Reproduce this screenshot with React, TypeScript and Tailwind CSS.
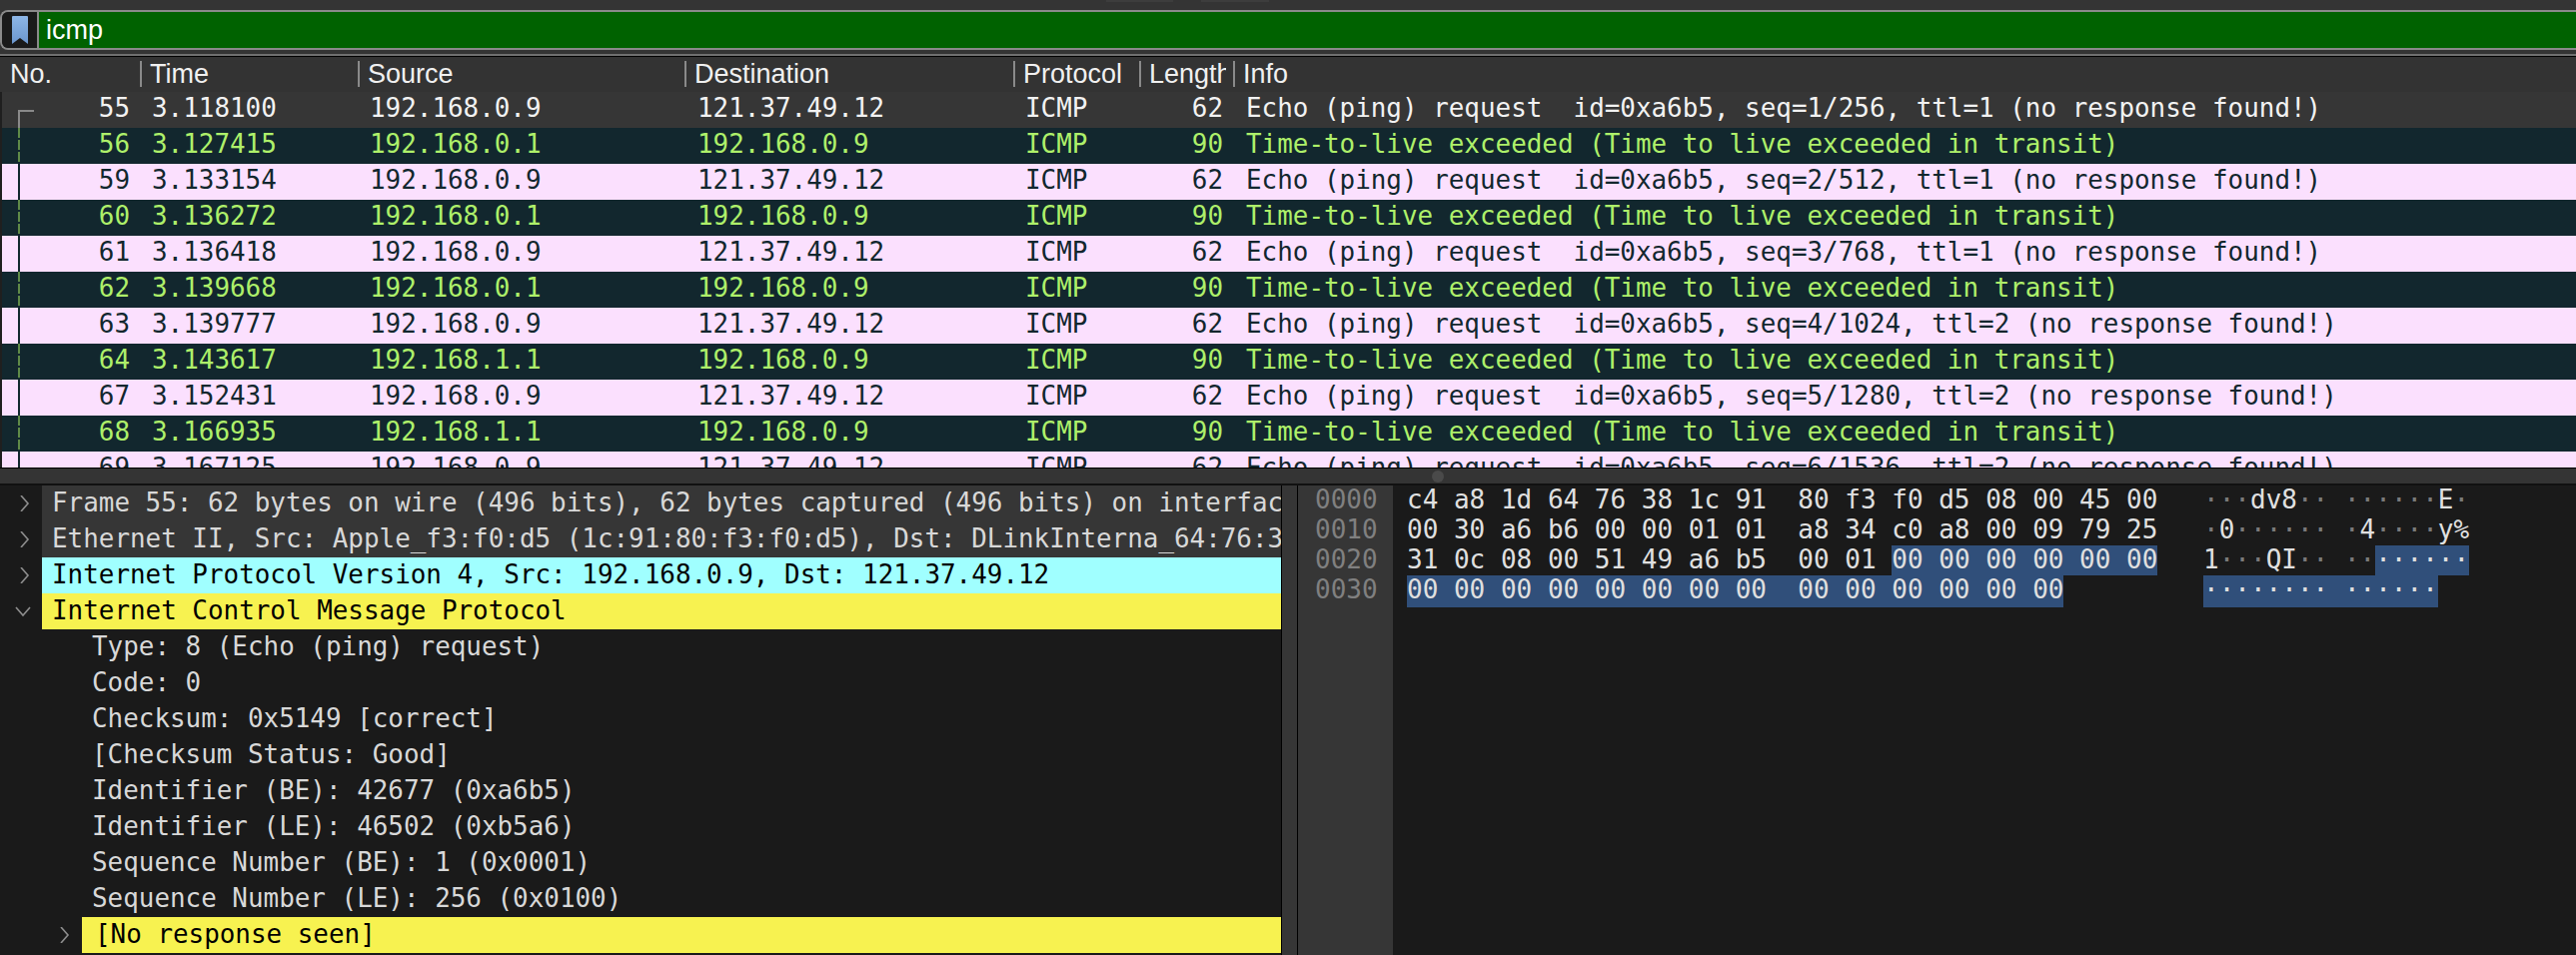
import * as React from 'react'

const MONO = "font-['DejaVu_Sans_Mono',monospace]"

type Packet = {
  no: number
  time: string
  source: string
  destination: string
  length: number
  info: string
}

const echo = (seq: string, ttl: number) =>
  `Echo (ping) request  id=0xa6b5, seq=${seq}, ttl=${ttl} (no response found!)`
const exceeded = 'Time-to-live exceeded (Time to live exceeded in transit)'

const packets: Packet[] = [
  { no: 55, time: '3.118100', source: '192.168.0.9', destination: '121.37.49.12', length: 62, info: echo('1/256', 1) },
  { no: 56, time: '3.127415', source: '192.168.0.1', destination: '192.168.0.9', length: 90, info: exceeded },
  { no: 59, time: '3.133154', source: '192.168.0.9', destination: '121.37.49.12', length: 62, info: echo('2/512', 1) },
  { no: 60, time: '3.136272', source: '192.168.0.1', destination: '192.168.0.9', length: 90, info: exceeded },
  { no: 61, time: '3.136418', source: '192.168.0.9', destination: '121.37.49.12', length: 62, info: echo('3/768', 1) },
  { no: 62, time: '3.139668', source: '192.168.0.1', destination: '192.168.0.9', length: 90, info: exceeded },
  { no: 63, time: '3.139777', source: '192.168.0.9', destination: '121.37.49.12', length: 62, info: echo('4/1024', 2) },
  { no: 64, time: '3.143617', source: '192.168.1.1', destination: '192.168.0.9', length: 90, info: exceeded },
  { no: 67, time: '3.152431', source: '192.168.0.9', destination: '121.37.49.12', length: 62, info: echo('5/1280', 2) },
  { no: 68, time: '3.166935', source: '192.168.1.1', destination: '192.168.0.9', length: 90, info: exceeded },
  { no: 69, time: '3.167125', source: '192.168.0.9', destination: '121.37.49.12', length: 62, info: echo('6/1536', 2) },
]

const COLS = 'grid grid-cols-[138px_218px_327px_329px_126px_94px_1fr]'

// 応答パケットとの関連を示す左端の線
function Connector({ first, reply }: { first: boolean; reply: boolean }) {
  return (
    <svg className="absolute left-0 top-0" width="40" height="36">
      {first ? (
        <path d="M32 19H17V36" fill="none" stroke="#8a8a8a" strokeWidth="2" />
      ) : reply ? (
        <path d="M17 0V36" fill="none" stroke="#5f8a48" strokeWidth="2" strokeDasharray="10 2" />
      ) : (
        <path d="M17 0V36" fill="none" stroke="#12272e" strokeWidth="2" />
      )}
    </svg>
  )
}

function PacketRow({ packet, index }: { packet: Packet; index: number }) {
  const reply = packet.length === 90
  const tone = index === 0
    ? 'bg-[#363636] text-[#f2f2f2]'
    : reply
      ? 'bg-[#12272e] text-[#aef06a]'
      : 'bg-[#fbe0fe] text-[#12272e]'
  return (
    <div className={`${COLS} ${tone} relative h-9 shrink-0 items-start whitespace-pre text-[25.92px] leading-[32px] ${MONO}`}>
      <Connector first={index === 0} reply={reply} />
      <span className="pr-[10px] text-right">{packet.no}</span>
      <span className="pl-[12px]">{packet.time}</span>
      <span className="pl-[12px]">{packet.source}</span>
      <span className="pl-[13px]">{packet.destination}</span>
      <span className="pl-[12px]">ICMP</span>
      <span className="pr-[10px] text-right">{packet.length}</span>
      <span className="pl-[13px]">{packet.info}</span>
    </div>
  )
}

function HeaderCell({ label, first, clip }: { label: string; first?: boolean; clip?: boolean }) {
  return (
    <div className={`flex h-[26px] items-center pl-[8px] ${clip ? 'pr-[7px]' : ''} ${first ? '' : 'border-l-2 border-[#8a8a8a]'}`}>
      <span className="overflow-hidden whitespace-nowrap">{label}</span>
    </div>
  )
}

function Chevron({ open }: { open?: boolean }) {
  return (
    <svg width="16" height="16" viewBox="0 0 16 16" fill="none" stroke="#8e8e8e" strokeWidth="1.6">
      <path d={open ? 'M1 4l7 8 7-8' : 'M4 0l7 8-7 8'} />
    </svg>
  )
}

type TreeRow = { text: string; tone: string; chevron: 'open' | 'closed' }

const topRows: TreeRow[] = [
  { text: 'Frame 55: 62 bytes on wire (496 bits), 62 bytes captured (496 bits) on interface', tone: 'bg-[#363636] text-[#d8d8d8]', chevron: 'closed' },
  { text: 'Ethernet II, Src: Apple_f3:f0:d5 (1c:91:80:f3:f0:d5), Dst: DLinkInterna_64:76:38', tone: 'bg-[#363636] text-[#d8d8d8]', chevron: 'closed' },
  { text: 'Internet Protocol Version 4, Src: 192.168.0.9, Dst: 121.37.49.12', tone: 'bg-[#a0ffff] text-black', chevron: 'closed' },
  { text: 'Internet Control Message Protocol', tone: 'bg-[#f7f250] text-black', chevron: 'open' },
]

const icmpFields = [
  'Type: 8 (Echo (ping) request)',
  'Code: 0',
  'Checksum: 0x5149 [correct]',
  '[Checksum Status: Good]',
  'Identifier (BE): 42677 (0xa6b5)',
  'Identifier (LE): 46502 (0xb5a6)',
  'Sequence Number (BE): 1 (0x0001)',
  'Sequence Number (LE): 256 (0x0100)',
]

// 印字できないバイトの点は暗く表示する
function Ascii({ text }: { text: string }) {
  return (
    <>
      {text.split('').map((c, i) => (
        <span key={i} className={c === '·' ? 'text-[#7a7a7a]' : ''}>{c}</span>
      ))}
    </>
  )
}

function HexLine({ offset, children, ascii, tall }: { offset: string; children: React.ReactNode; ascii: React.ReactNode; tall?: boolean }) {
  return (
    <div className={`flex items-start leading-[28px] ${tall ? 'h-8' : 'h-[30px]'}`}>
      <span className="h-full w-[95px] shrink-0 bg-[#363636] pl-[17px] text-[#808080]">{offset}</span>
      <span className="ml-[14px] w-[797px] shrink-0">{children}</span>
      <span>{ascii}</span>
    </div>
  )
}

const Sel = ({ children, tall }: { children: React.ReactNode; tall?: boolean }) => (
  <span className={`inline-block bg-[#304f7a] align-top ${tall ? 'h-8' : 'h-[30px]'}`}>{children}</span>
)

export default function App() {
  return (
    <div className="flex h-[956px] w-[2578px] flex-col overflow-hidden bg-[#343434] font-['Liberation_Sans',sans-serif] text-[27px] text-white">
      {/* ツールバーの名残 */}
      <div className="flex h-[10px] shrink-0 items-start">
        <div className="ml-[1107px] h-[2px] w-[67px] bg-[#3d3d3d]" />
        <div className="ml-[28px] h-[2px] w-[68px] bg-[#3d3d3d]" />
      </div>

      {/* フィルターバー */}
      <div className="flex h-10 shrink-0 overflow-hidden rounded-l-lg border-y-2 border-l-2 border-[#8a8a8a]">
        <div className="flex w-[37px] shrink-0 items-center justify-center border-r-2 border-[#8a8a8a] bg-[#1a1a1a]">
          <svg width="16" height="28" viewBox="0 0 16 28">
            <defs>
              <linearGradient id="mark" x1="0" y1="0" x2="0" y2="1">
                <stop offset="0" stopColor="#8db6e6" />
                <stop offset="1" stopColor="#6b97cf" />
              </linearGradient>
            </defs>
            <path d="M1 0H15A1 1 0 0 1 16 1V28L8 22L0 28V1A1 1 0 0 1 1 0Z" fill="url(#mark)" />
          </svg>
        </div>
        <div className="flex flex-1 items-center bg-[#006200] pl-[7px]">icmp</div>
      </div>

      <div className="mt-[4px] h-[2px] shrink-0 bg-[#707070]" />

      {/* パケット一覧 */}
      <div className="flex h-[412px] shrink-0 flex-col overflow-hidden border-t border-black bg-[#1f1f1f] pl-[2px]">
        <div className={`${COLS} h-[35px] shrink-0 -ml-[2px] bg-[#333333] pl-[2px] pt-1 text-[#f0f0f0]`}>
          <HeaderCell label="No." first />
          <HeaderCell label="Time" />
          <HeaderCell label="Source" />
          <HeaderCell label="Destination" />
          <HeaderCell label="Protocol" />
          <HeaderCell label="Length" clip />
          <HeaderCell label="Info" />
        </div>
        {packets.map((p, i) => (
          <PacketRow key={p.no} packet={p} index={i} />
        ))}
      </div>

      {/* 上下ペインの仕切り */}
      <div className="flex h-[16px] shrink-0 items-center border-t border-black pl-[1433px]">
        <div className="h-3 w-3 rounded-full bg-[#4a4a4a]" />
      </div>

      {/* 詳細ペインとバイトペイン */}
      <div className="flex min-h-0 flex-1 border-t-2 border-[#111]">
        <div className={`w-[1283px] shrink-0 overflow-hidden border-r border-black bg-[#1a1a1a] pl-[2px] whitespace-pre text-[#d8d8d8] ${MONO} text-[25.92px] leading-[34px]`}>
          {topRows.map(r => (
            <div key={r.text} className="flex h-9">
              <div className={`flex w-[40px] shrink-0 items-center ${r.chevron === 'open' ? 'pl-[13px]' : 'pl-[15px]'}`}>
                <Chevron open={r.chevron === 'open'} />
              </div>
              <div className={`${r.tone} flex-1 overflow-hidden pl-[10px]`}>{r.text}</div>
            </div>
          ))}
          {icmpFields.map(f => (
            <div key={f} className="h-9 pl-[90px]">{f}</div>
          ))}
          <div className="flex h-9">
            <div className="flex w-[80px] shrink-0 items-center justify-end pr-[9px]">
              <Chevron />
            </div>
            <div className="flex-1 bg-[#f7f250] pl-[13px] text-black">[No response seen]</div>
          </div>
        </div>

        <div className="w-[15px] shrink-0 bg-[#363636]" />

        <div className={`flex min-w-0 flex-1 flex-col border-l border-black bg-[#1a1a1a] whitespace-pre text-[26px] text-[#e0e0e0] ${MONO}`}>
          <HexLine offset="0000" ascii={<Ascii text="···dv8·· ······E·" />}>
            {'c4 a8 1d 64 76 38 1c 91  80 f3 f0 d5 08 00 45 00'}
          </HexLine>
          <HexLine offset="0010" ascii={<Ascii text="·0······ ·4····y%" />}>
            {'00 30 a6 b6 00 00 01 01  a8 34 c0 a8 00 09 79 25'}
          </HexLine>
          <HexLine offset="0020" ascii={<><Ascii text="1···QI·· ··" /><Sel>······</Sel></>}>
            {'31 0c 08 00 51 49 a6 b5  00 01 '}<Sel>00 00 00 00 00 00</Sel>
          </HexLine>
          <HexLine tall offset="0030" ascii={<Sel tall>{'········ ······'}</Sel>}>
            <Sel tall>{'00 00 00 00 00 00 00 00  00 00 00 00 00 00'}</Sel>
          </HexLine>
          <div className="w-[95px] flex-1 bg-[#363636]" />
        </div>
      </div>
    </div>
  )
}
